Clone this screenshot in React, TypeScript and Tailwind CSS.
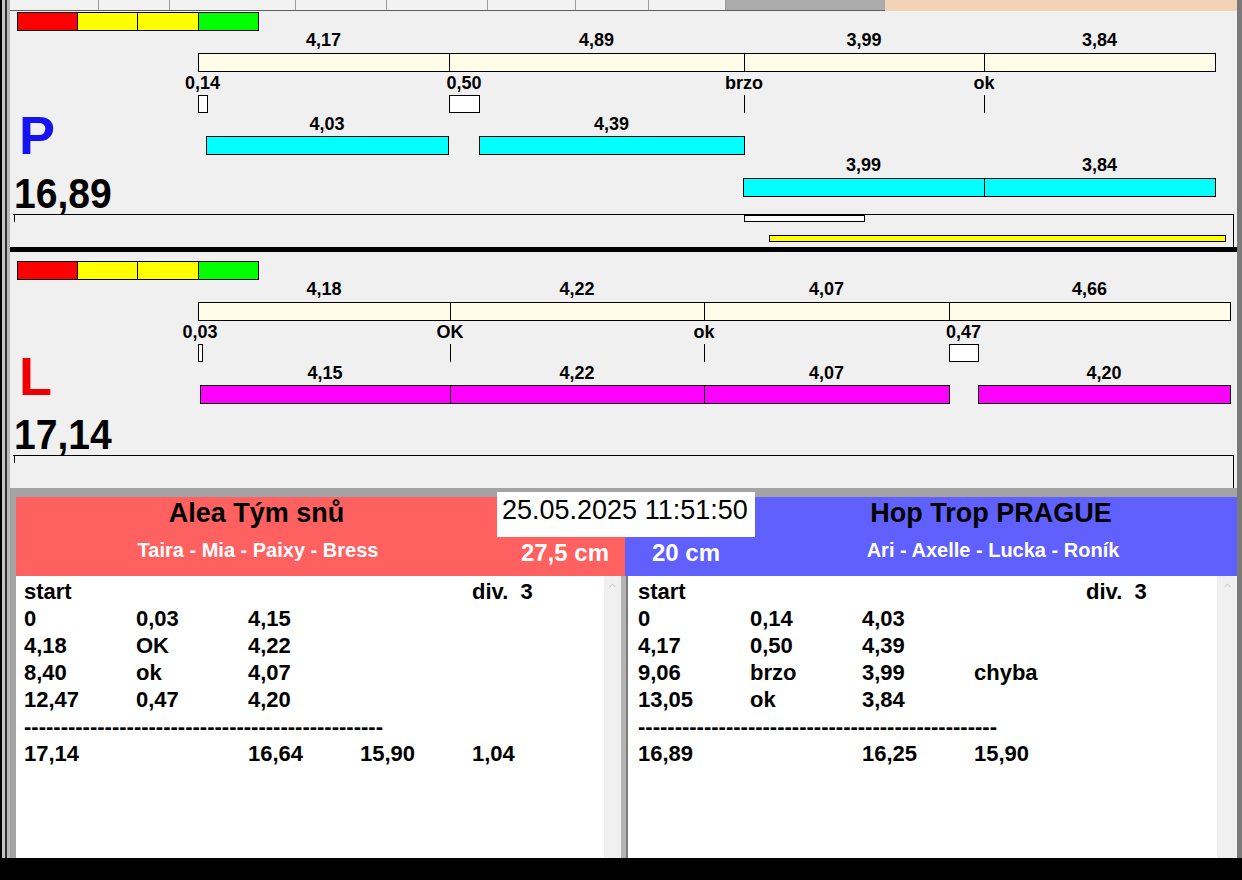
import React from "react";
import { ChevronUp } from "lucide-react";

type Bar = { x1: number; x2: number; label: string };
type Track = { top: number; labelTop: number; fill: string; bars: Bar[] };
type Reaction = { x: number; w: number; label: string };

const beige = "bg-[#fffde8]";
const cyan = "bg-[#00ffff]";
const magenta = "bg-[#ff00ff]";

// x positions are px from the left edge of the panel (data scaled ~60px / s)
const pTracks: Track[] = [
    {
        top: 50, labelTop: 28, fill: beige, bars: [
            { x1: 188, x2: 439, label: "4,17" },
            { x1: 439, x2: 734, label: "4,89" },
            { x1: 734, x2: 974, label: "3,99" },
            { x1: 974, x2: 1205, label: "3,84" },
        ],
    },
    {
        top: 133, labelTop: 112, fill: cyan, bars: [
            { x1: 196, x2: 438, label: "4,03" },
            { x1: 469, x2: 734, label: "4,39" },
        ],
    },
    {
        top: 175, labelTop: 153, fill: cyan, bars: [
            { x1: 733, x2: 974, label: "3,99" },
            { x1: 974, x2: 1205, label: "3,84" },
        ],
    },
];

const pReactions: Reaction[] = [
    { x: 188, w: 9, label: "0,14" },
    { x: 439, w: 30, label: "0,50" },
    { x: 734, w: 0, label: "brzo" },
    { x: 974, w: 0, label: "ok" },
];

const lTracks: Track[] = [
    {
        top: 50, labelTop: 28, fill: beige, bars: [
            { x1: 188, x2: 440, label: "4,18" },
            { x1: 440, x2: 694, label: "4,22" },
            { x1: 694, x2: 939, label: "4,07" },
            { x1: 939, x2: 1220, label: "4,66" },
        ],
    },
    {
        top: 133, labelTop: 112, fill: magenta, bars: [
            { x1: 190, x2: 440, label: "4,15" },
            { x1: 440, x2: 694, label: "4,22" },
            { x1: 694, x2: 939, label: "4,07" },
            { x1: 968, x2: 1220, label: "4,20" },
        ],
    },
];

const lReactions: Reaction[] = [
    { x: 188, w: 4, label: "0,03" },
    { x: 440, w: 0, label: "OK" },
    { x: 694, w: 0, label: "ok" },
    { x: 939, w: 29, label: "0,47" },
];

const ColourBar: React.FC<{ className: string }> = ({ className }) => (
    <div className={`ml-[7px] flex h-[19px] w-[242px] shrink-0 border border-black ${className}`}>
        <div className="w-[60px] border-r border-black bg-[#ff0000]" />
        <div className="w-[60px] border-r border-black bg-[#ffff00]" />
        <div className="w-[61px] border-r border-black bg-[#ffff00]" />
        <div className="flex-1 bg-[#00ff00]" />
    </div>
);

const ChartLabel: React.FC<{ x: number; top: number; text: string }> = ({ x, top, text }) => (
    <div
        className="absolute -translate-x-1/2 whitespace-nowrap text-[18px] font-bold leading-[18px] text-black"
        style={{ left: x, top }}
    >
        {text}
    </div>
);

const Chart: React.FC<{ tracks: Track[]; reactions: Reaction[] }> = ({ tracks, reactions }) => (
    <>
        {tracks.map((t, i) => (
            <React.Fragment key={i}>
                {t.bars.map((b, j) => (
                    <React.Fragment key={j}>
                        <div
                            className={`absolute h-[19px] border border-black ${t.fill}`}
                            style={{ left: b.x1, top: t.top, width: b.x2 - b.x1 + 1 }}
                        />
                        <ChartLabel x={(b.x1 + b.x2) / 2} top={t.labelTop} text={b.label} />
                    </React.Fragment>
                ))}
            </React.Fragment>
        ))}
        {reactions.map((r, i) => (
            <React.Fragment key={i}>
                <ChartLabel x={r.x + r.w / 2} top={71} text={r.label} />
                {r.w > 0 ? (
                    <div
                        className="absolute top-[92px] h-[18px] border border-black bg-white"
                        style={{ left: r.x, width: r.w + 1 }}
                    />
                ) : (
                    <div className="absolute top-[92px] h-[18px] w-px bg-black" style={{ left: r.x }} />
                )}
            </React.Fragment>
        ))}
    </>
);

type PanelProps = {
    letter: string;
    letterClass: string;
    total: string;
    shifted?: boolean;
    tracks: Track[];
    reactions: Reaction[];
    extra?: React.ReactNode;
};

const Panel: React.FC<PanelProps> = ({ letter, letterClass, total, shifted, tracks, reactions, extra }) => (
    <div className="relative flex h-[236px] shrink-0 flex-col overflow-hidden bg-[#f0f0f0]">
        <ColourBar className={shifted ? "mt-px" : "mt-[9px]"} />
        <div className="flex-1" />
        <div className={`ml-[9px] h-[54px] text-[54px] font-bold leading-[54px] ${letterClass}`}>{letter}</div>
        <div className="ml-[4px] mt-[12px] h-[40px] origin-left scale-x-[0.93] text-[42px] font-bold leading-[40px] text-black">
            {total}
        </div>
        <div className="relative mx-[3px] h-[33px] shrink-0 border-r border-t border-black">
            <div className="absolute left-px top-0 h-[7px] w-px bg-black" />
            {extra}
        </div>
        <div className={`pointer-events-none absolute inset-x-0 h-[236px] ${shifted ? "-top-[8px]" : "top-0"}`}>
            <Chart tracks={tracks} reactions={reactions} />
        </div>
    </div>
);

const tabWidths = ["w-[89px]", "w-[71px]", "w-[126px]", "w-[91px]", "w-[101px]", "w-[88px]", "w-[73px]", "w-[77px]"];

const TabStrip = () => (
    <div className="flex h-[11px] shrink-0">
        <div className="flex border-b border-[#5e5e5e] bg-[#f2f2f2]">
            {tabWidths.map((w, i) => (
                <div key={i} className={`${w} h-full border-r border-[#9c9c9c]`} />
            ))}
        </div>
        <div className="w-[159px] border-b border-[#5e5e5e] bg-[#ababab]" />
        <div className="flex-1 bg-[#f2d3b6]" />
    </div>
);

type Row = string[] | "dash";

const leftRows: Row[] = [
    ["start", "", "", "", "div.  3"],
    ["0", "0,03", "4,15"],
    ["4,18", "OK", "4,22"],
    ["8,40", "ok", "4,07"],
    ["12,47", "0,47", "4,20"],
    "dash",
    ["17,14", "", "16,64", "15,90", "1,04"],
];

const rightRows: Row[] = [
    ["start", "", "", "", "div.  3"],
    ["0", "0,14", "4,03"],
    ["4,17", "0,50", "4,39"],
    ["9,06", "brzo", "3,99", "chyba"],
    ["13,05", "ok", "3,84"],
    "dash",
    ["16,89", "", "16,25", "15,90"],
];

const ResultTable: React.FC<{ rows: Row[]; padClass: string; barClass: string }> = ({ rows, padClass, barClass }) => (
    <div className="flex min-w-0 flex-1">
        <div className={`flex-1 bg-white pt-[2px] text-[22px] font-bold leading-[27px] text-black ${padClass}`}>
            {rows.map((r, i) =>
                r === "dash" ? (
                    <div key={i} className="whitespace-nowrap">{"-".repeat(49)}</div>
                ) : (
                    <div key={i} className="flex">
                        {r.map((c, j) => (
                            <div key={j} className="w-[112px] shrink-0 whitespace-pre">{c}</div>
                        ))}
                    </div>
                )
            )}
        </div>
        <div className={`flex justify-center bg-[#f0f0f0] pt-[4px] ${barClass}`}>
            <ChevronUp size={11} strokeWidth={1.5} color="#a8a8a8" />
        </div>
    </div>
);

const Scoreboard = () => (
    <div className="flex flex-1 flex-col bg-[#a3a3a3] pl-[6px] pt-[9px]">
        <div className="relative flex h-[79px] shrink-0">
            <div className="flex w-[609px] flex-col bg-[#ff6060]">
                <div className="h-[40px] w-[481px] pt-[3px] text-center text-[27px] font-bold leading-[27px] text-black">
                    Alea Tým snů
                </div>
                <div className="flex">
                    <div className="w-[484px] pt-[3px] text-center text-[20px] font-bold leading-[20px] text-white">
                        Taira - Mia - Paixy - Bress
                    </div>
                    <div className="flex-1 pr-[16px] pt-[4px] text-right text-[24px] font-bold leading-[24px] text-white">
                        27,5 cm
                    </div>
                </div>
            </div>
            <div className="flex flex-1 flex-col bg-[#6060ff]">
                <div className="h-[40px] pl-[120px] pt-[3px] text-center text-[27px] font-bold leading-[27px] text-black">
                    Hop Trop PRAGUE
                </div>
                <div className="flex">
                    <div className="w-[110px] pl-[27px] pt-[4px] text-[24px] font-bold leading-[24px] text-white">20 cm</div>
                    <div className="flex-1 pl-[14px] pt-[3px] text-center text-[20px] font-bold leading-[20px] text-white">
                        Ari - Axelle - Lucka - Roník
                    </div>
                </div>
            </div>
            {/* date box sits over both headers */}
            <div className="absolute left-[481px] top-[-5px] h-[45px] w-[258px] bg-white pl-[5px] pt-[5px] text-[27px] leading-[27px] text-black">
                25.05.2025 11:51:50
            </div>
        </div>
        <div className="flex flex-1">
            <div className="flex w-[605px]">
                <ResultTable rows={leftRows} padClass="pl-[8px]" barClass="w-[17px]" />
            </div>
            <div className="w-[7px] border-r-2 border-[#7a7a7a] bg-[#b4b4b4]" />
            <ResultTable rows={rightRows} padClass="pl-[10px]" barClass="w-[20px]" />
        </div>
    </div>
);

const App: React.FC = () => (
    <div className="flex h-[880px] w-[1242px] flex-col overflow-hidden bg-black font-['Liberation_Sans',Arial,sans-serif]">
        <div className="flex h-[858px]">
            {/* window frame */}
            <div className="flex w-[10px] shrink-0">
                <div className="w-[2px] bg-black" />
                <div className="w-[3px] bg-[#c4c4c4]" />
                <div className="w-[2px] bg-[#2e2e2e]" />
                <div className="w-[3px] bg-[#b8b8b8]" />
            </div>
            <div className="flex min-w-0 flex-1 flex-col bg-[#f0f0f0]">
                <TabStrip />
                <Panel
                    letter="P"
                    letterClass="text-[#1414f0]"
                    total="16,89"
                    shifted
                    tracks={pTracks}
                    reactions={pReactions}
                    extra={
                        <>
                            <div className="absolute left-[731px] top-0 h-[7px] w-[121px] border border-black bg-white" />
                            <div className="absolute left-[756px] top-[20px] h-[7px] w-[457px] border border-black bg-[#ffff00]" />
                        </>
                    }
                />
                <div className="h-[5px] shrink-0 bg-black" />
                <Panel letter="L" letterClass="text-[#f00000]" total="17,14" tracks={lTracks} reactions={lReactions} />
                <Scoreboard />
            </div>
            <div className="w-[5px] shrink-0 bg-[#7a7a7a]" />
        </div>
    </div>
);

export default App;
